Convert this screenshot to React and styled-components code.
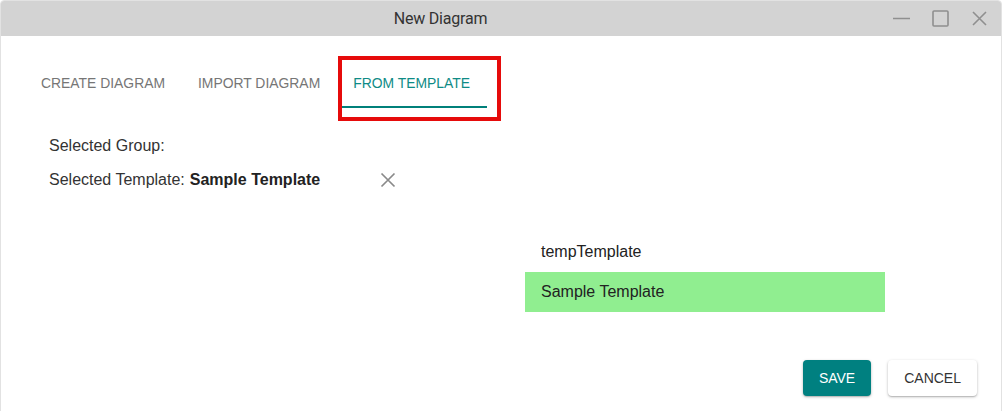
import React from 'react';
import styled, { createGlobalStyle } from 'styled-components';

const GlobalStyle = createGlobalStyle`
  html, body {
    margin: 0;
    padding: 0;
    background: #fff;
    font-family: "Liberation Sans", Arial, sans-serif;
  }
`;

const Window = styled.div`
  position: relative;
  width: 1002px;
  height: 420px;
  box-sizing: border-box;
  border: 1px solid #e2e2e2;
  border-radius: 4px 4px 0 0;
  display: flex;
  flex-direction: column;
  background: #fff;
  overflow: hidden;
`;

const TitleBar = styled.div`
  height: 35px;
  background: #d3d3d3;
  display: flex;
  align-items: center;
  flex-shrink: 0;
`;

const Title = styled.div`
  flex: 1;
  text-align: center;
  font-family: Roboto, "Liberation Sans", sans-serif;
  font-size: 16px;
  color: #333;
  letter-spacing: -0.2px;
`;

const Controls = styled.div`
  width: 121px;
  display: flex;
  align-items: center;
`;

const Ctrl = styled.span`
  display: inline-flex;
  width: ${(p) => p.w}px;
  justify-content: center;
  color: #8f8f8f;
`;

const Body = styled.div`
  display: flex;
  flex-direction: column;
  padding: 22px 24px 0 28px;
`;

const Tabs = styled.div`
  display: flex;
  gap: 9px;
`;

const Tab = styled.div`
  height: 50px;
  padding: 1px ${(p) => (p.active ? 17 : 12)}px 0 12px;
  display: flex;
  align-items: center;
  box-sizing: border-box;
  font-size: 13.9px;
  text-transform: uppercase;
  color: ${(p) => (p.active ? '#0f8b86' : '#767676')};
  border-bottom: 2px solid ${(p) => (p.active ? '#00807a' : 'transparent')};
`;

const Annotation = styled.div`
  position: absolute;
  left: 337px;
  top: 55px;
  width: 163px;
  height: 65px;
  box-sizing: border-box;
  border: 4px solid #e60b0b;
  pointer-events: none;
`;

const Info = styled.div`
  display: flex;
  flex-direction: column;
  padding-left: 20px;
  margin-top: 28px;
  gap: 15px;
`;

const InfoRow = styled.div`
  display: flex;
  align-items: center;
  height: 19px;
  font-size: 16px;
  color: #333;
`;

const Strong = styled.b`
  font-weight: 700;
  margin-left: 5px;
  color: #222;
`;

const Clear = styled.span`
  display: inline-flex;
  margin-left: 60px;
  color: #8a8a8a;
`;

const List = styled.div`
  margin: 43px 0 0 496px;
  width: 360px;
  display: flex;
  flex-direction: column;
`;

const Item = styled.div`
  height: 40px;
  display: flex;
  align-items: center;
  padding-left: 16px;
  font-size: 16px;
  color: #222;
  background: ${(p) => (p.selected ? '#90ee90' : 'transparent')};
`;

const Actions = styled.div`
  display: flex;
  justify-content: flex-end;
  gap: 17px;
  margin-top: 48px;
`;

const Button = styled.button`
  height: 36px;
  padding: 0 16px;
  border: none;
  border-radius: 4px;
  font-family: inherit;
  font-size: 14px;
  text-transform: uppercase;
  cursor: pointer;
  color: ${(p) => (p.primary ? '#fff' : '#333')};
  background: ${(p) => (p.primary ? '#008080' : '#fff')};
  box-shadow: 0 1px 3px rgba(0, 0, 0, 0.25), 0 1px 1px rgba(0, 0, 0, 0.12);
`;

export default function App() {
  return (
    <>
      <GlobalStyle />
      <Window>
        <TitleBar>
          <Title>New Diagram</Title>
          <Controls>
            <Ctrl w={42}>
              <svg width="17" height="17" viewBox="0 0 17 17">
                <path d="M0 8.5h17" stroke="currentColor" strokeWidth="1.6" />
              </svg>
            </Ctrl>
            <Ctrl w={36}>
              <svg width="17" height="17" viewBox="0 0 17 17">
                <rect x="1" y="1" width="15" height="15" rx="1" fill="none" stroke="currentColor" strokeWidth="1.6" />
              </svg>
            </Ctrl>
            <Ctrl w={43}>
              <svg width="15" height="15" viewBox="0 0 15 15">
                <path d="M1 1L14 14M14 1L1 14" stroke="currentColor" strokeWidth="1.6" />
              </svg>
            </Ctrl>
          </Controls>
        </TitleBar>
        <Body>
          <Tabs>
            <Tab>Create Diagram</Tab>
            <Tab>Import Diagram</Tab>
            <Tab active>From Template</Tab>
          </Tabs>
          <Info>
            <InfoRow>Selected Group:</InfoRow>
            <InfoRow>
              Selected Template:<Strong>Sample Template</Strong>
              <Clear>
                <svg width="16" height="16" viewBox="0 0 16 16">
                  <path d="M1.5 1.5L14.5 14.5M14.5 1.5L1.5 14.5" stroke="currentColor" strokeWidth="1.7" />
                </svg>
              </Clear>
            </InfoRow>
          </Info>
          <List>
            <Item>tempTemplate</Item>
            <Item selected>Sample Template</Item>
          </List>
          <Actions>
            <Button primary>Save</Button>
            <Button>Cancel</Button>
          </Actions>
        </Body>
        <Annotation />
      </Window>
    </>
  );
}
